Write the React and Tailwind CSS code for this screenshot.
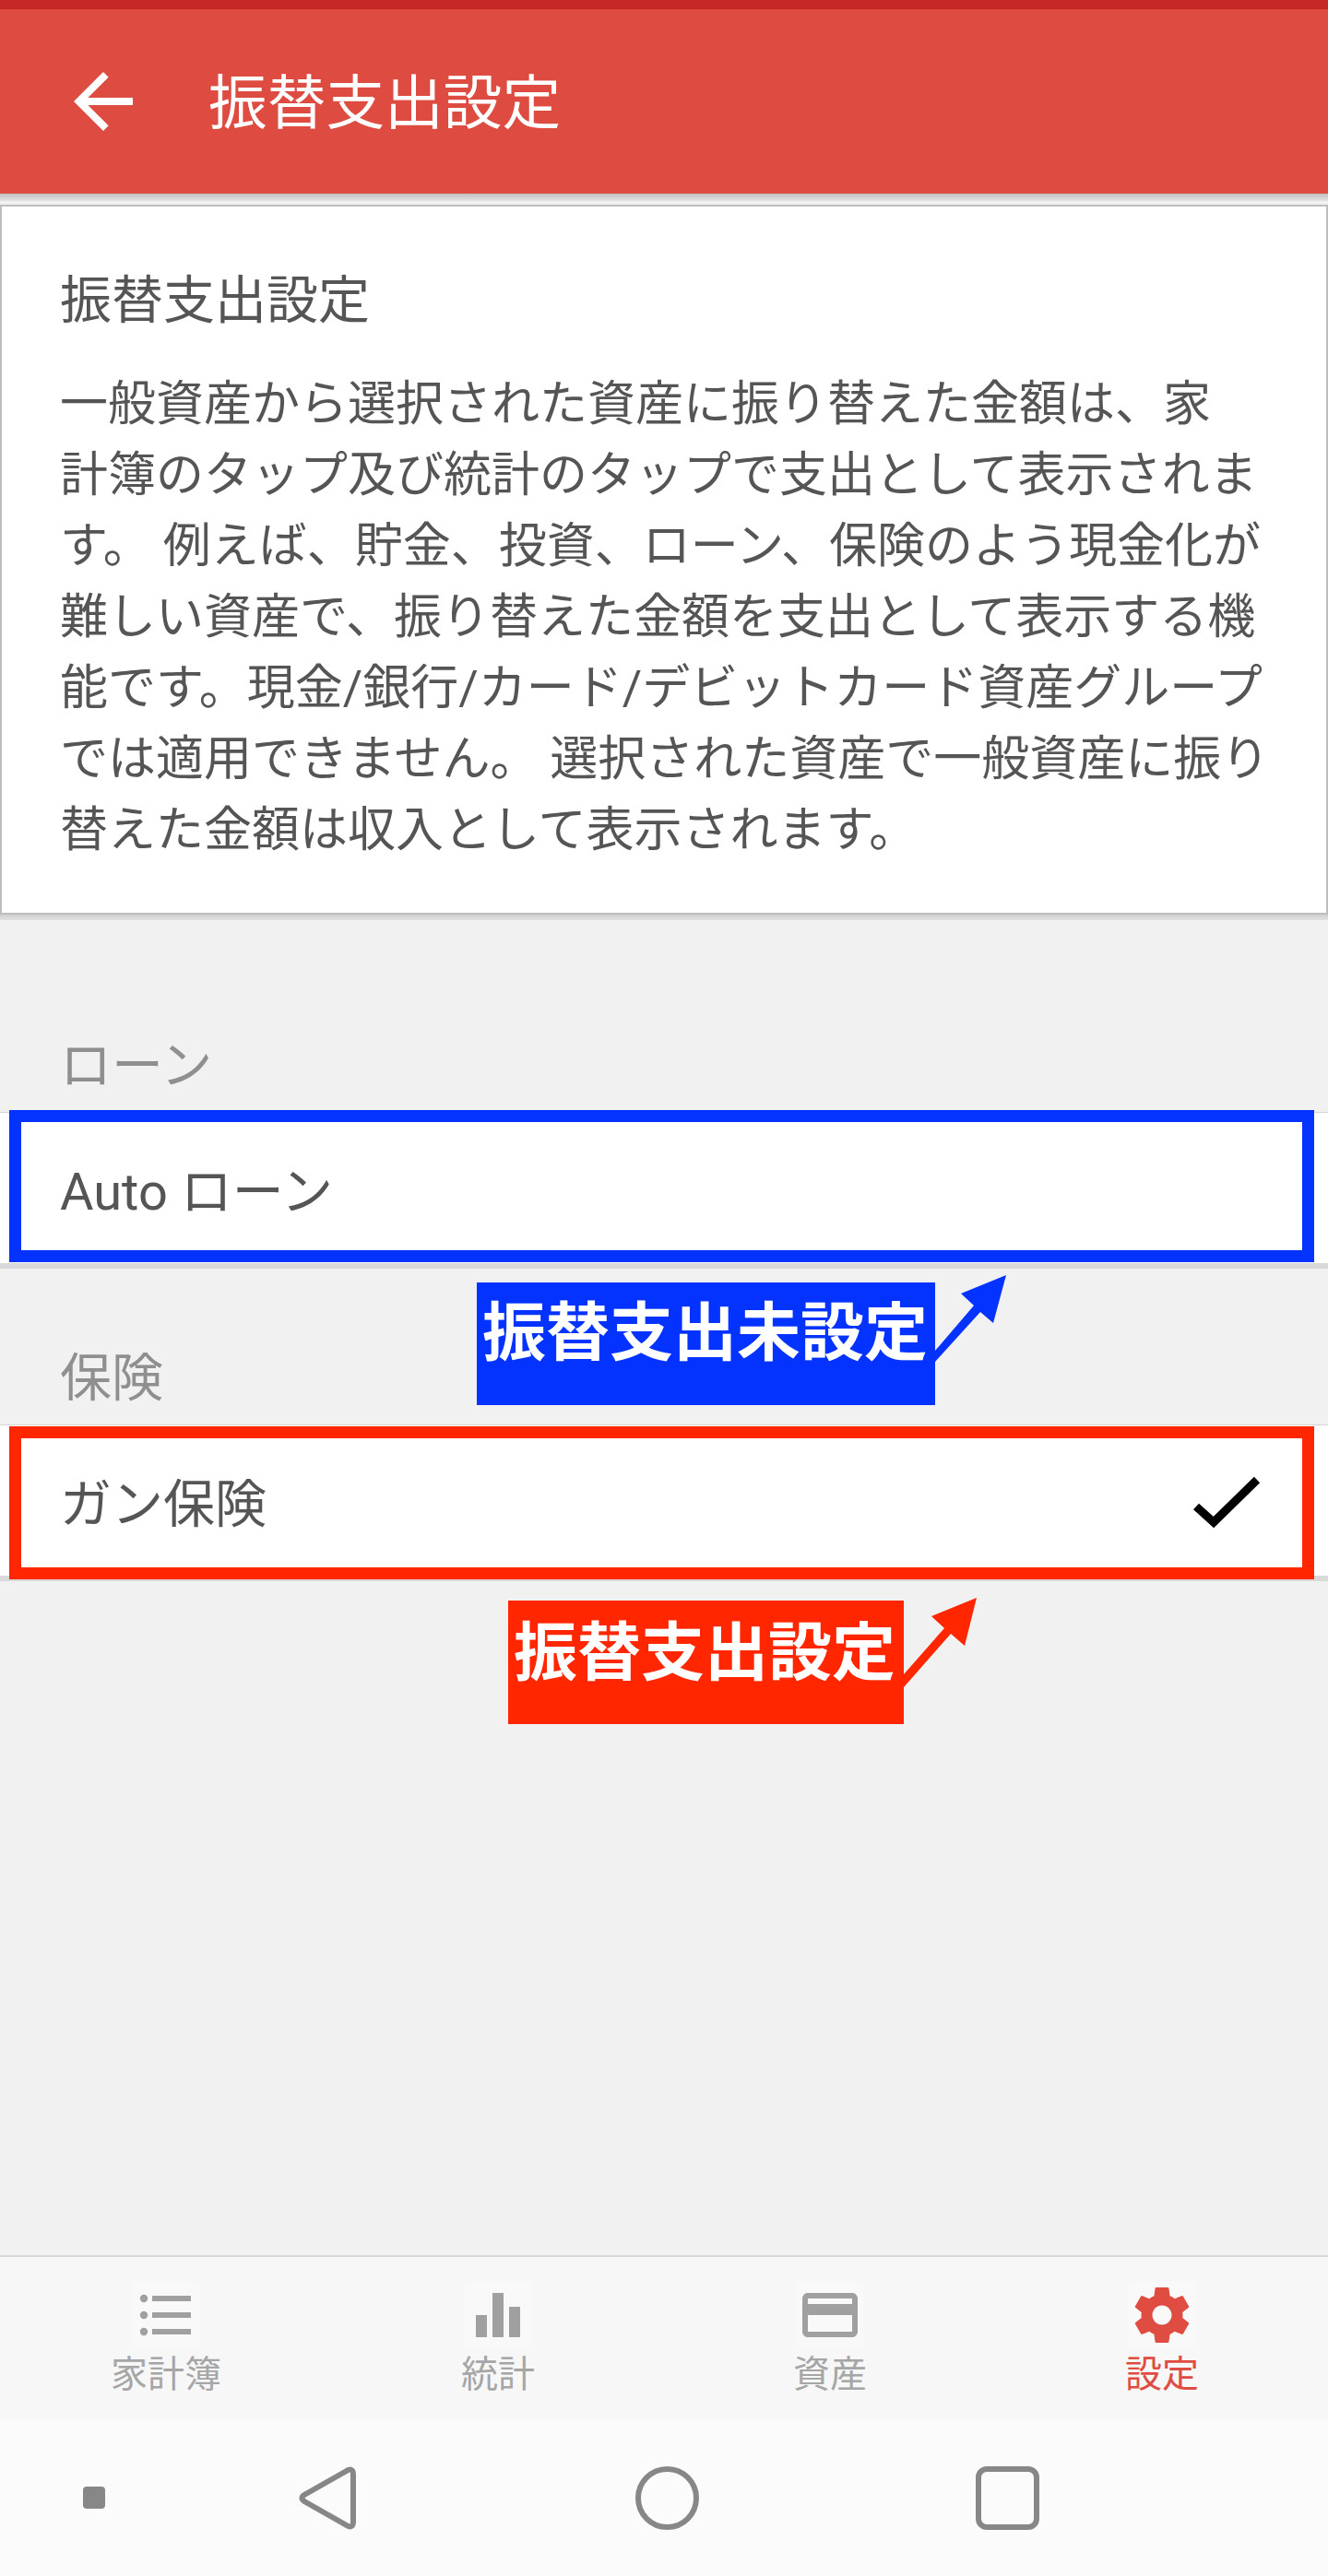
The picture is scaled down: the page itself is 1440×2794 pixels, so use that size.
import React from "react";

const bodyLines = [
  "一般資産から選択された資産に振り替えた金額は、家",
  "計簿のタップ及び統計のタップで支出として表示されま",
  "す。 例えば、貯金、投資、ローン、保険のよう現金化が",
  "難しい資産で、振り替えた金額を支出として表示する機",
  "能です。現金/銀行/カード/デビットカード資産グループ",
  "では適用できません。 選択された資産で一般資産に振り",
  "替えた金額は収入として表示されます。",
];

function Tab({ label, active, children }) {
  return (
    <div className="flex flex-col items-center pt-[27px]">
      <div className="w-[72px] h-[72px] bg-[#f9f9f9]">{children}</div>
      <div className={`mt-[5px] text-[40px] leading-[48px] ${active ? "text-[#df4d42]" : "text-[#a6a6a6]"}`}>{label}</div>
    </div>
  );
}

function Row({ children }) {
  return (
    <div>
      <div className="h-[164px] bg-white border-t-[1px] border-[#d4d4d4] flex items-center justify-between pl-[65px] pr-[72px] pt-[8px] text-[56px] leading-[64px] text-[#555555]">
        {children}
      </div>
      <div className="h-[6px] bg-[#d9d9d9]" />
    </div>
  );
}

function SectionLabel({ children, height }) {
  return (
    <div className={`${height} flex items-end pl-[65px] pb-[18px] text-[56px] leading-[64px] text-[#8f8f8f]`}>
      {children}
    </div>
  );
}

export default function App() {
  return (
    <div className="relative w-[1440px] h-[2794px] overflow-hidden flex flex-col bg-[#f1f1f1] font-[Roboto,'Noto_Sans_CJK_JP',sans-serif]">
      <div className="h-[10px] bg-[#c62828]" />
      <header className="h-[200px] bg-[#dd4b41] flex items-center pl-[64px]">
        <svg width="96" height="96" viewBox="0 0 24 24" fill="#ffffff">
          <path d="M20 11H7.83l5.59-5.59L12 4l-8 8 8 8 1.41-1.41L7.83 13H20v-2z" />
        </svg>
        <h1 className="ml-[66px] mt-[6px] text-[63.7px] leading-[80px] text-white font-normal">振替支出設定</h1>
      </header>
      <div className="h-[8px] bg-gradient-to-b from-[#c0c0c0] to-[#e4e4e4]" />

      <main className="flex-1 pt-[4px]">
        <section className="h-[770px] bg-white border-[2px] border-[#bdbdbd] pl-[63px] pt-[62px] text-[#555555]">
          <h2 className="text-[56px] leading-[80px] font-normal">振替支出設定</h2>
          <div className="mt-[34px] text-[52px] leading-[77px]">
            {bodyLines.map((l) => (
              <div key={l} className="whitespace-nowrap">{l}</div>
            ))}
          </div>
        </section>
        <div className="h-[6px] bg-gradient-to-b from-[#cfcfcf] to-[#e2e2e2]" />

        <SectionLabel height="h-[208px]">ローン</SectionLabel>
        <Row>Auto ローン</Row>

        <SectionLabel height="h-[169px]">保険</SectionLabel>
        <Row>
          <span>ガン保険</span>
          <svg width="78" height="62" viewBox="0 0 78 62" fill="none" stroke="#000000" strokeWidth="9">
            <polyline points="7,33 26,50 73,4" />
          </svg>
        </Row>
      </main>

      <nav className="h-[178px] border-t-[2px] border-[#d8d8d8] bg-[#f7f7f7] grid grid-cols-4">
        <Tab label="家計簿">
          <svg width="72" height="72" viewBox="0 0 24 24" fill="#a0a0a0">
            <circle cx="4" cy="6" r="1.4" />
            <circle cx="4" cy="12" r="1.4" />
            <circle cx="4" cy="18" r="1.4" />
            <path d="M7 5h14v2H7zM7 11h14v2H7zM7 17h14v2H7z" />
          </svg>
        </Tab>
        <Tab label="統計">
          <svg width="72" height="72" viewBox="0 0 24 24" fill="#a0a0a0">
            <path d="M4 12h4v8H4zM10 4h4v16h-4zM16 9h4v11h-4z" />
          </svg>
        </Tab>
        <Tab label="資産">
          <svg width="72" height="72" viewBox="0 0 24 24" fill="#a0a0a0">
            <path d="M20 4H4c-1.11 0-1.99.89-1.99 2L2 18c0 1.11.89 2 2 2h16c1.11 0 2-.89 2-2V6c0-1.11-.89-2-2-2zm0 14H4v-6h16v6zm0-10H4V6h16v2z" />
          </svg>
        </Tab>
        <Tab label="設定" active>
          <svg width="72" height="72" viewBox="0 0 24 24" fill="#df4d42">
            <path d="M19.43 12.98c.04-.32.07-.64.07-.98s-.03-.66-.07-.98l2.11-1.65c.19-.15.24-.42.12-.64l-2-3.46c-.12-.22-.39-.3-.61-.22l-2.49 1c-.52-.4-1.08-.73-1.69-.98l-.38-2.65C14.46 2.18 14.25 2 14 2h-4c-.25 0-.46.18-.49.42l-.38 2.65c-.61.25-1.17.59-1.69.98l-2.49-1c-.23-.09-.49 0-.61.22l-2 3.46c-.13.22-.07.49.12.64l2.11 1.65c-.04.32-.07.65-.07.98s.03.66.07.98l-2.11 1.65c-.19.15-.24.42-.12.64l2 3.46c.12.22.39.3.61.22l2.49-1c.52.4 1.08.73 1.69.98l.38 2.65c.03.24.24.42.49.42h4c.25 0 .46-.18.49-.42l.38-2.65c.61-.25 1.17-.59 1.69-.98l2.49 1c.23.09.49 0 .61-.22l2-3.46c.12-.22.07-.49-.12-.64l-2.11-1.65zM12 15.5c-1.93 0-3.5-1.57-3.5-3.5s1.57-3.5 3.5-3.5 3.5 1.57 3.5 3.5-1.57 3.5-3.5 3.5z" />
          </svg>
        </Tab>
      </nav>

      <div className="h-[170px] bg-[#fbfbfb] flex items-center pl-[90px]">
        <div className="w-[24px] h-[24px] rounded-[4px] bg-[#878787]" />
        <svg className="ml-[210px]" width="62" height="69" viewBox="0 0 62 69" fill="none" stroke="#878787" strokeWidth="6">
          <path d="M50 6 Q59 0 59 9 L59 60 Q59 69 50 63 L6 38 Q1 34.5 6 31 Z" />
        </svg>
        <svg className="ml-[303px]" width="69" height="69" viewBox="0 0 69 69" fill="none" stroke="#878787" strokeWidth="6">
          <circle cx="34.5" cy="34.5" r="31.5" />
        </svg>
        <div className="ml-[300px] w-[69px] h-[69px] rounded-[12px] border-[6px] border-[#878787]" />
      </div>

      {/* annotations laid over the screenshot */}
      <div className="absolute left-[10px] top-[1204px] w-[1415px] h-[165px] border-[13px] border-[#0433ff]" />
      <div className="absolute left-[517px] top-[1391px] w-[497px] h-[133px] bg-[#0433ff] pl-[6px] pt-[11px] text-[69px] leading-[90px] font-bold text-white whitespace-nowrap">
        振替支出未設定
      </div>
      <svg className="absolute left-[1010px] top-[1380px]" width="90" height="100" viewBox="1010 1380 90 100" fill="#0433ff">
        <polygon points="1014,1465 1056,1416 1042,1403 1091,1383 1077,1435 1063,1423 1014,1477" />
      </svg>

      <div className="absolute left-[10px] top-[1547px] w-[1415px] h-[166px] border-[13px] border-[#ff2600]" />
      <div className="absolute left-[551px] top-[1736px] w-[429px] h-[134px] bg-[#ff2600] pl-[6px] pt-[13px] text-[69px] leading-[90px] font-bold text-white whitespace-nowrap">
        振替支出設定
      </div>
      <svg className="absolute left-[976px] top-[1730px]" width="90" height="104" viewBox="976 1730 90 104" fill="#ff2600">
        <polygon points="980,1816 1024,1766 1010,1753 1059,1733 1046,1785 1031,1772 980,1830" />
      </svg>
    </div>
  );
}
